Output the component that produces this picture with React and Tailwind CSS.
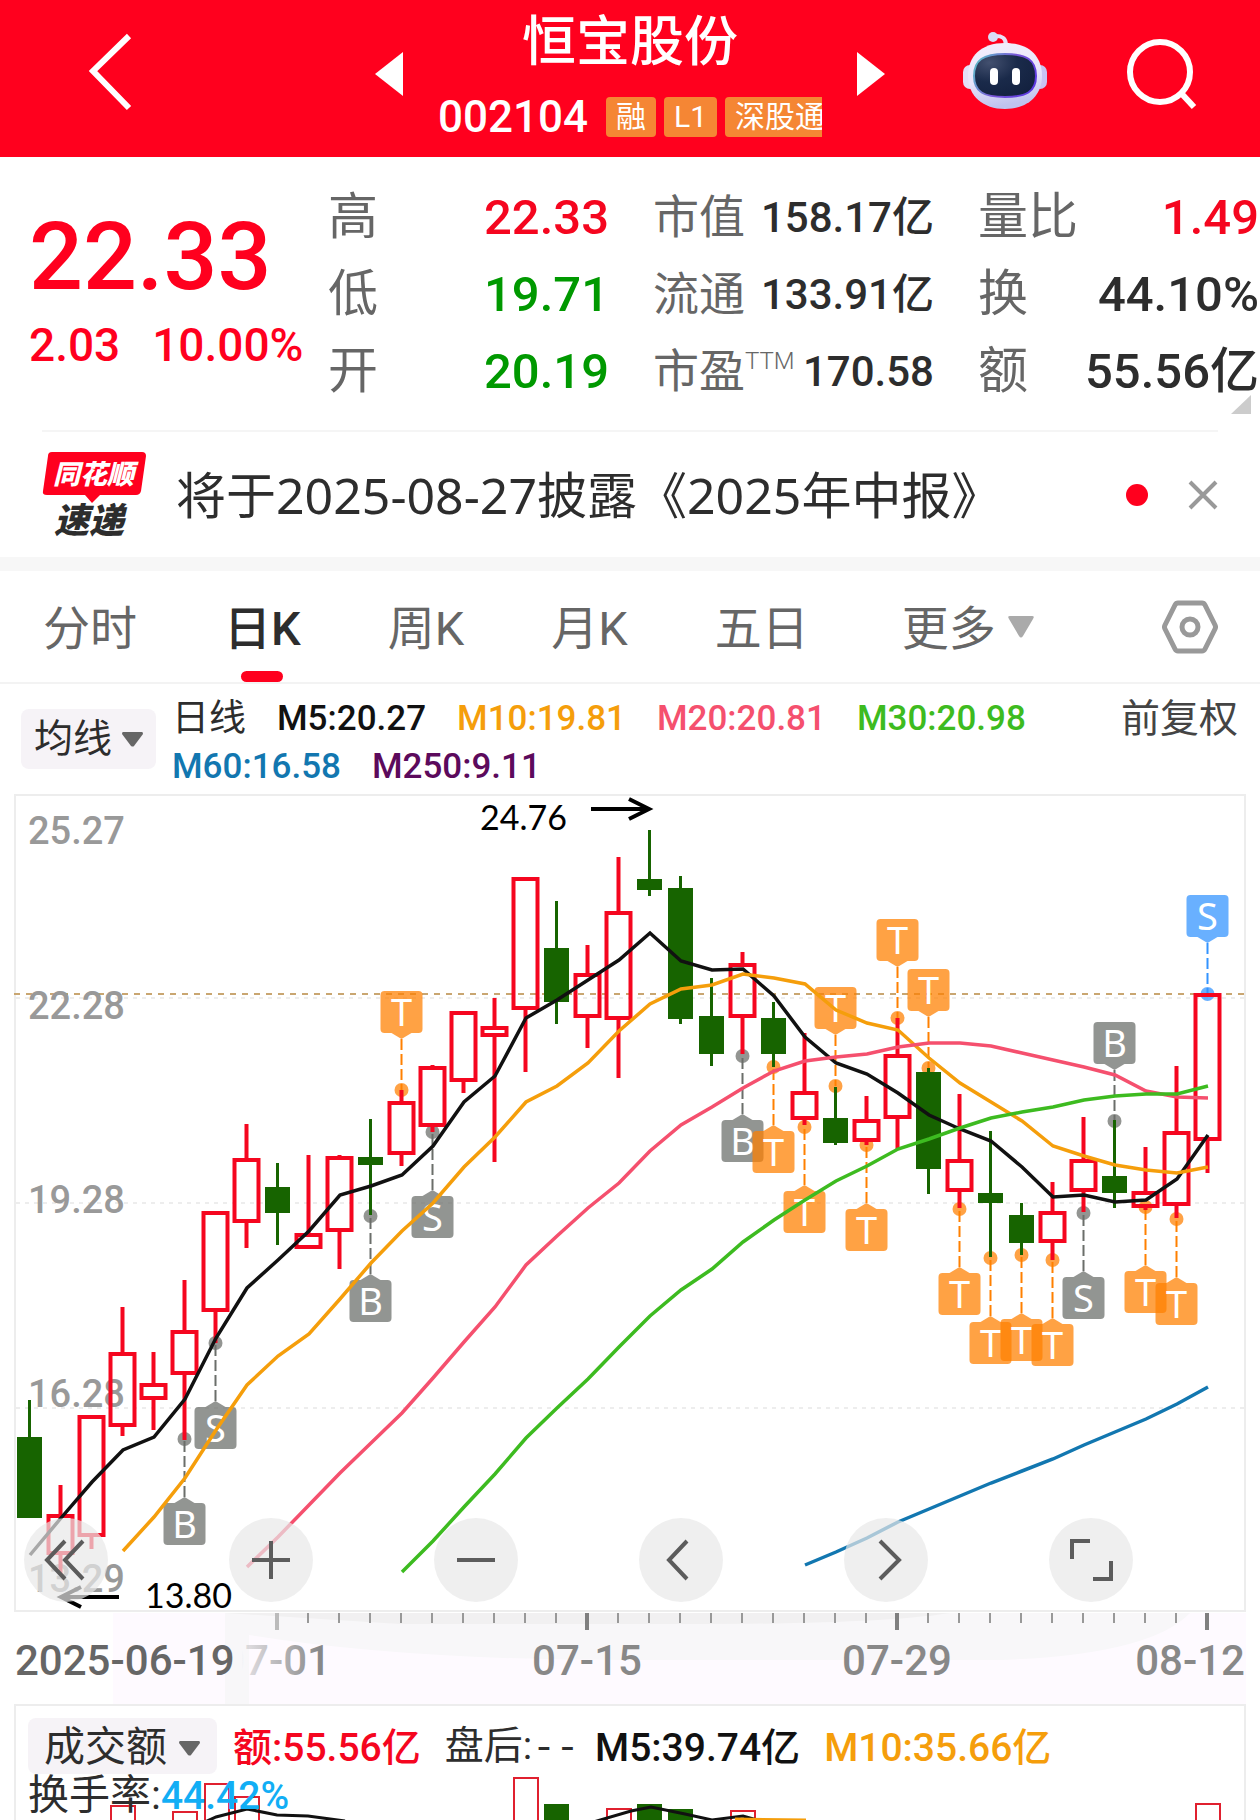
import { useState } from "react";

const CJK = "font-[Roboto,'Noto_Sans_CJK_SC',sans-serif]";
const UP = "#f5061f";
const DOWN = "#176400";

const STEP = 31;
const xAt = (i) => 29 + i * STEP;

// [high, bodyTop, bodyBottom, low, direction]
const CANDLES = [
  [1400, 1437, 1518, 1518, "d"],
  [1485, 1514, 1555, 1575, "u"],
  [1415, 1415, 1537, 1549, "u"],
  [1307, 1352, 1427, 1436, "u"],
  [1352, 1383, 1400, 1430, "u"],
  [1280, 1330, 1375, 1440, "u"],
  [1211, 1211, 1312, 1343, "u"],
  [1124, 1158, 1223, 1248, "u"],
  [1163, 1187, 1213, 1245, "d"],
  [1155, 1233, 1249, 1249, "u"],
  [1155, 1156, 1232, 1269, "u"],
  [1119, 1157, 1165, 1215, "d"],
  [1090, 1101, 1155, 1166, "u"],
  [1065, 1066, 1127, 1132, "u"],
  [1011, 1011, 1082, 1093, "u"],
  [998, 1026, 1037, 1162, "u"],
  [877, 877, 1010, 1072, "u"],
  [901, 948, 1002, 1024, "d"],
  [945, 973, 1018, 1048, "u"],
  [857, 911, 1020, 1078, "u"],
  [830, 879, 890, 896, "d"],
  [876, 888, 1019, 1024, "d"],
  [978, 1016, 1054, 1066, "d"],
  [952, 963, 1018, 1054, "u"],
  [1002, 1018, 1054, 1067, "d"],
  [1033, 1091, 1120, 1125, "u"],
  [1087, 1118, 1143, 1145, "d"],
  [1096, 1119, 1142, 1145, "u"],
  [1018, 1054, 1119, 1149, "u"],
  [1068, 1072, 1169, 1194, "d"],
  [1094, 1159, 1192, 1208, "u"],
  [1131, 1193, 1203, 1257, "d"],
  [1203, 1215, 1243, 1255, "d"],
  [1182, 1211, 1243, 1260, "u"],
  [1117, 1159, 1192, 1212, "u"],
  [1120, 1176, 1193, 1208, "d"],
  [1147, 1191, 1208, 1210, "u"],
  [1066, 1131, 1206, 1218, "u"],
  [993, 993, 1141, 1173, "u"],
];

const AVERAGES = [
  {
    color: "#111",
    start: 0,
    ys: [
      1555, 1518, 1482, 1450, 1437, 1399, 1338, 1288, 1260, 1231, 1195, 1186,
      1175, 1146, 1102, 1076, 1018, 1000, 980, 960, 933, 961, 970, 969, 996,
      1037, 1063, 1074, 1093, 1115, 1129, 1141, 1167, 1197, 1195, 1202, 1200,
      1179, 1135,
    ],
  },
  {
    color: "#f59e0b",
    start: 3,
    ys: [
      1551, 1517, 1478, 1430, 1385, 1356, 1334, 1299, 1263, 1231, 1203, 1167,
      1137, 1102, 1086, 1063, 1031, 1004, 989, 985, 974, 978, 984, 1010, 1023,
      1030, 1058, 1083, 1102, 1121, 1146, 1156, 1165, 1170, 1173, 1167,
    ],
  },
  {
    color: "#f5506e",
    start: 7,
    ys: [
      1567, 1537, 1505, 1473, 1443, 1413, 1378, 1342, 1307, 1265, 1236, 1208,
      1183, 1151, 1125, 1107, 1088, 1071, 1061, 1057, 1054, 1047, 1043, 1043,
      1046, 1053, 1060, 1067, 1075, 1091, 1097, 1098,
    ],
  },
  {
    color: "#3dbb20",
    start: 12,
    ys: [
      1572, 1541, 1507, 1474, 1438, 1408, 1379, 1347, 1316, 1290, 1269, 1242,
      1220, 1200, 1181, 1166, 1149, 1139, 1128, 1118, 1112, 1107, 1100, 1096,
      1094, 1094, 1086,
    ],
  },
  {
    color: "#1277b0",
    start: 25,
    ys: [
      1565, 1552, 1538, 1522, 1509, 1496, 1483, 1471, 1459, 1445, 1432, 1419,
      1404, 1387,
    ],
  },
];

// [candle index, letter, dot y, badge above the candle]
const TRADES = [
  [5, "B", 1439, false],
  [6, "S", 1343, false],
  [11, "B", 1216, false],
  [12, "T", 1090, true],
  [13, "S", 1132, false],
  [23, "B", 1056, false],
  [24, "T", 1067, false],
  [25, "T", 1127, false],
  [26, "T", 1086, true],
  [27, "T", 1145, false],
  [28, "T", 1018, true],
  [29, "T", 1068, true],
  [30, "T", 1209, false],
  [31, "T", 1258, false],
  [32, "T", 1255, false],
  [33, "T", 1260, false],
  [34, "S", 1213, false],
  [35, "B", 1121, true],
  [36, "T", 1207, false],
  [37, "T", 1219, false],
  [38, "S", 994, true],
];

const STATS = [
  [
    { label: "高", value: "22.33", tone: "text-[#f5061f]" },
    { label: "低", value: "19.71", tone: "text-[#009900]" },
    { label: "开", value: "20.19", tone: "text-[#009900]" },
  ],
  [
    { label: "市值", value: "158.17亿", tone: "text-[#2d2d2d]" },
    { label: "流通", value: "133.91亿", tone: "text-[#2d2d2d]" },
    { label: "市盈", sup: "TTM", value: "170.58", tone: "text-[#2d2d2d]" },
  ],
  [
    { label: "量比", value: "1.49", tone: "text-[#f5061f]" },
    { label: "换", value: "44.10%", tone: "text-[#2d2d2d]" },
    { label: "额", value: "55.56亿", tone: "text-[#2d2d2d]" },
  ],
];

const TABS = ["分时", "日K", "周K", "月K", "五日"];

const LEGEND = [
  ["M5:20.27", "text-[#111111]"],
  ["M10:19.81", "text-[#f59e0b]"],
  ["M20:20.81", "text-[#f5506e]"],
  ["M30:20.98", "text-[#3dbb20]"],
  ["M60:16.58", "text-[#1277b0]"],
  ["M250:9.11", "text-[#5c0a5c]"],
];

function Header() {
  return (
    <header className="flex h-[157px] items-center bg-[#ff001e] pr-[63px] pb-[9px] pl-[88px] text-white">
      <button aria-label="返回" className="pb-1">
        <svg width="44" height="78" viewBox="0 0 44 78" fill="none">
          <path d="M41 3 5 38l36 37" stroke="currentColor" strokeWidth="6" />
        </svg>
      </button>
      <div className="mr-[78px] ml-auto flex items-center gap-[35px]">
        <button aria-label="上一只">
          <svg width="28" height="44" viewBox="0 0 28 44" fill="currentColor">
            <path d="M28 0v44L0 22z" />
          </svg>
        </button>
        <div className="flex w-[384px] flex-col items-center gap-6 pt-0.5">
          <h1 className="text-[54px] leading-[60px] font-medium">恒宝股份</h1>
          <div className="flex w-full items-center gap-2 overflow-hidden whitespace-nowrap">
            <span className="mr-2.5 text-[44px] leading-10 font-medium">002104</span>
            {["融", "L1", "深股通"].map((tag) => (
              <span
                key={tag}
                className="flex h-10 shrink-0 items-center rounded-sm bg-[#f58634] px-2.5 text-[30px] leading-10"
              >
                {tag}
              </span>
            ))}
          </div>
        </div>
        <button aria-label="下一只">
          <svg width="28" height="44" viewBox="0 0 28 44" fill="currentColor">
            <path d="M0 0v44l28-22z" />
          </svg>
        </button>
      </div>
      <div className="flex items-center gap-20">
        <button aria-label="智能助手">
          <RobotIcon />
        </button>
        <button aria-label="搜索">
          <svg width="70" height="72" viewBox="0 0 70 72" fill="none" stroke="currentColor" strokeWidth="6">
            <circle cx="33" cy="34" r="30" />
            <path d="m54 55 13 14" />
          </svg>
        </button>
      </div>
    </header>
  );
}

function RobotIcon() {
  return (
    <svg className="mb-2" width="84" height="78" viewBox="0 0 84 78">
      <defs>
        <linearGradient id="shell" x1="0" y1="0" x2="0.2" y2="1">
          <stop offset="0" stopColor="#f3effc" />
          <stop offset="0.6" stopColor="#e9e4fa" />
          <stop offset="1" stopColor="#bfc3ee" />
        </linearGradient>
        <linearGradient id="rim" x1="0" y1="0.3" x2="1" y2="0.7">
          <stop offset="0" stopColor="#5fb4c8" />
          <stop offset="0.5" stopColor="#7a55d8" />
          <stop offset="1" stopColor="#5a38e0" />
        </linearGradient>
        <radialGradient id="face" cx="0.25" cy="0.2" r="0.9">
          <stop offset="0" stopColor="#43506f" />
          <stop offset="0.5" stopColor="#1a2a4a" />
          <stop offset="1" stopColor="#13213f" />
        </radialGradient>
      </defs>
      <path d="M31 5q12-1 12 9" fill="none" stroke="#e9dff5" strokeWidth="4" />
      <circle cx="30" cy="6" r="5" fill="#d9dcf6" />
      <rect x="0" y="34" width="14" height="24" rx="7" fill="#e4def8" />
      <rect x="70" y="34" width="14" height="24" rx="7" fill="#c9c2f2" />
      <path d="M42 12c24 0 37 13 37 33S64 78 42 78 5 65 5 45s13-33 37-33z" fill="url(#shell)" />
      <path
        d="M42 23c22 0 31 6 31 22S63 66 42 66 11 61 11 45s9-22 31-22z"
        fill="url(#face)"
        stroke="url(#rim)"
        strokeWidth="2"
      />
      <rect x="27" y="37" width="8" height="17" rx="4" fill="#fff" />
      <rect x="49" y="37" width="8" height="17" rx="4" fill="#fff" />
    </svg>
  );
}

function Quote() {
  return (
    <section className="relative flex pt-[22px] pr-px pb-5 pl-[29px] font-medium whitespace-nowrap">
      <div className="w-[299px] shrink-0 text-[#ff001e]">
        <p className="pt-7 text-[95px] leading-[100px]">22.33</p>
        <p className="flex gap-8 pt-2.5 text-[46px] leading-[56px]">
          <span>2.03</span>
          <span>10.00%</span>
        </p>
      </div>
      <div className="grid flex-1 grid-cols-3 gap-11">
        {STATS.map((column, c) => (
          <dl key={c}>
            {column.map((item) => (
              <div key={item.label} className="flex h-[77px] items-center justify-between">
                <dt
                  className={
                    c === 1
                      ? "flex text-[46px] font-normal text-[#666]"
                      : "flex text-[50px] font-normal text-[#666]"
                  }
                >
                  {item.label}
                  {item.sup && <sup className="top-0 pt-3 text-[24px] leading-6 font-light">{item.sup}</sup>}
                </dt>
                <dd className={c === 1 ? `${item.tone} text-[42px]` : `${item.tone} text-[49px]`}>{item.value}</dd>
              </div>
            ))}
          </dl>
        ))}
      </div>
      <svg className="absolute right-[9px] bottom-4" width="20" height="19" viewBox="0 0 20 19">
        <path d="M20 0v19H0z" fill="#ccc" />
      </svg>
    </section>
  );
}

function News() {
  const [open, setOpen] = useState(true);
  if (!open) return null;

  return (
    <section className="mx-[42px] flex h-[127px] items-center border-t-2 border-[#f5f5f5]">
      <svg
        width="104"
        height="88"
        viewBox="0 0 104 88"
        className="shrink-0 overflow-visible font-[Noto_Sans_CJK_SC,sans-serif]"
      >
        <path d="M10 1h90q4 0 4 4l-5 35q-1 4-5 4H58l-8 8-7-8H5q-5 0-4-4L6 5q0-4 4-4z" fill="#ff001e" />
        <text x="11" y="33" fontSize="27" fontWeight="900" fontStyle="italic" fill="#fff">
          同花顺
        </text>
        <text x="12" y="82" fontSize="35" fontWeight="900" fontStyle="italic" fill="#2d2d2d">
          速递
        </text>
      </svg>
      <a
        href="#report"
        className="ml-[30px] font-['Noto_Sans','Noto_Sans_CJK_SC',sans-serif] text-[50px] leading-[60px] whitespace-nowrap text-[#2d2d2d]"
      >
        将于2025-08-27披露《2025年中报》
      </a>
      <span className="ml-auto size-[22px] rounded-full bg-[#ff001e]" />
      <button aria-label="关闭" className="ml-10" onClick={() => setOpen(false)}>
        <svg width="30" height="30" viewBox="0 0 30 30" stroke="#999" strokeWidth="4">
          <path d="m2 2 26 26M28 2 2 28" />
        </svg>
      </button>
    </section>
  );
}

function Tabs() {
  const [active, setActive] = useState("日K");

  return (
    <nav className="flex h-[113px] items-center gap-[87px] border-b-2 border-[#f3f3f3] pr-[42px] pl-[43px] text-[47px] whitespace-nowrap text-[#666]">
      {TABS.map((tab) => (
        <button
          key={tab}
          onClick={() => setActive(tab)}
          className={
            tab === active
              ? "relative flex h-full items-center pt-1.5 font-medium text-[#2d2d2d]"
              : "flex h-full items-center pt-1.5"
          }
        >
          {tab}
          {tab === active && (
            <span className="absolute bottom-0 left-1/2 h-[11px] w-[42px] -translate-x-1/2 rounded-full bg-[#ff001e]" />
          )}
        </button>
      ))}
      <button className="ml-1.5 flex h-full items-center gap-3 pt-1.5">
        更多
        <svg className="mb-1.5" width="26" height="22" viewBox="0 0 26 22" fill="#aaa">
          <path d="M2 0h22q3 0 1 3L15 20q-2 3-4 0L1 3q-2-3 1-3z" />
        </svg>
      </button>
      <button aria-label="设置" className="ml-auto">
        <svg width="56" height="54" viewBox="0 0 56 54" fill="none" stroke="#999" strokeWidth="5" strokeLinejoin="round">
          <path d="M16 3h24q2 0 3 2l10 20q1 2 0 4L43 49q-1 2-3 2H16q-2 0-3-2L3 29q-1-2 0-4L13 5q1-2 3-2z" />
          <circle cx="28" cy="27" r="8" />
        </svg>
      </button>
    </nav>
  );
}

function Caret() {
  return (
    <svg width="21" height="15" viewBox="0 0 21 15" fill="#666">
      <path d="M1 0h19q1 0 1 2l-9 12q-1 1-3 0L0 2q0-2 1-2z" />
    </svg>
  );
}

function Legend() {
  return (
    <section className="flex h-[110px] pr-[22px] pl-[21px] text-[35px] whitespace-nowrap">
      <button className="mt-[25px] flex h-[60px] items-center gap-2.5 rounded-lg bg-[#f6f3f7] px-[13px] text-[39px] text-[#2d2d2d]">
        均线
        <Caret />
      </button>
      <div className="ml-4 flex flex-1 flex-wrap content-start gap-x-[31px] pt-[11px] leading-[48px] font-medium">
        <span className="text-[37px] font-normal text-[#2d2d2d]">日线</span>
        {LEGEND.map(([text, tone]) => (
          <span key={text} className={tone}>
            {text}
          </span>
        ))}
      </div>
      <button className="h-[48px] pt-[11px] text-[39px] leading-[48px] text-[#444]">前复权</button>
    </section>
  );
}

function Trade({ index, letter, dot, above }) {
  const x = xAt(index) + 0.5;
  const top = above ? dot - 99 : dot + 64;
  const tip = above ? top + 48 : top - 6;
  const color = letter === "T" ? "#ff8000" : index === 38 ? "#3393ff" : "#6b6e6a";
  const arrow = above
    ? `M${x - 10} ${top + 42}L${x} ${tip}L${x + 10} ${top + 42}z`
    : `M${x - 10} ${top}L${x} ${tip}L${x + 10} ${top}z`;

  return (
    <g>
      <path d={`M${x} ${tip}V${dot}`} stroke={color} strokeWidth="2" strokeDasharray="11 4" />
      <circle cx={x} cy={dot} r="7" fill={color} opacity="0.73" />
      <g fill={color} opacity="0.73">
        <rect x={x - 21} y={top} width="42" height="42" rx="4" />
        <path d={arrow} />
      </g>
      <text x={x} y={top + 35} fontSize="38" fill="#fff" textAnchor="middle" className="font-[Noto_Sans,sans-serif]">
        {letter}
      </text>
    </g>
  );
}

function Candle({ index, data }) {
  const [high, top, bottom, low, dir] = data;
  const x = xAt(index);
  if (dir === "d") {
    return (
      <g fill={DOWN}>
        <rect x={x - 1} y={high} width="3" height={low - high} />
        <rect x={x - 12} y={top} width="25" height={bottom - top} />
      </g>
    );
  }
  return (
    <g stroke={UP} strokeWidth="4" fill="none">
      <path d={`M${x + 0.5} ${high}V${top}M${x + 0.5} ${bottom}V${low}`} />
      <rect x={x - 11.5} y={top + 2} width="24" height={bottom - top - 4} />
    </g>
  );
}

function KLineChart() {
  return (
    <div className="relative">
      <svg viewBox="0 794 1260 910" className="block w-full">
        <defs>
          <linearGradient id="fade" gradientUnits="userSpaceOnUse" x1="242" y1="0" x2="320" y2="0">
            <stop offset="0" stopColor="#888" stopOpacity="0" />
            <stop offset="0.05" stopColor="#888" stopOpacity="0.25" />
            <stop offset="1" stopColor="#888" />
          </linearGradient>
        </defs>
        <rect x="113" y="1613" width="1133" height="91" fill="#fefaff" />
        <path d="M225 1613H1190Q1150 1655 1000 1660H630Q400 1660 249 1635V1704H225z" fill="#f8f7f9" />
        <path d="M225 1613H950Q880 1624 700 1624H400z" fill="#f1f0f1" />

        <rect x="15" y="795" width="1230" height="816" fill="none" stroke="#ededed" strokeWidth="2" />
        <g stroke="#ededed" strokeWidth="2" strokeDasharray="4 5">
          <path d="M16 998H1244M16 1203H1244M16 1408H1244" />
        </g>
        <path d="M14 994H1244" stroke="#c9a671" strokeWidth="2" strokeDasharray="6 6" />

        <g fontSize="38" fontWeight="500" fill="#999">
          <text x="28" y="844">25.27</text>
          <text x="28" y="1019">22.28</text>
          <text x="28" y="1213">19.28</text>
          <text x="28" y="1407">16.28</text>
          <text x="28" y="1592">13.29</text>
        </g>

        {TRADES.map(([index, letter, dot, above]) => (
          <Trade key={index} index={index} letter={letter} dot={dot} above={above} />
        ))}
        {CANDLES.map((data, i) => (
          <Candle key={i} index={i} data={data} />
        ))}
        {AVERAGES.map(({ color, start, ys }) => (
          <polyline
            key={color}
            points={ys.map((y, i) => `${xAt(start + i) + 1},${y}`).join(" ")}
            fill="none"
            stroke={color}
            strokeWidth="3.5"
          />
        ))}

        <g fontSize="34" fill="#000" className="font-[Lato,sans-serif]">
          <text x="480" y="830">24.76</text>
          <text x="145" y="1608">13.80</text>
        </g>
        <g fill="none" stroke="#000" strokeWidth="4">
          <path d="M591 809H648M629 799L649 809L629 819" />
          <path d="M119 1597H62M81 1587L61 1597L81 1607" />
        </g>

        {CANDLES.map((_, i) => {
          if (i < 8) return null;
          const major = (i - 8) % 10 === 0;
          return (
            <path
              key={i}
              d={`M${xAt(i)} 1613V${major ? 1630 : 1623}`}
              stroke={i === 8 ? "#bbb" : major ? "#808080" : "#999"}
              strokeWidth={major ? 4 : 2}
            />
          );
        })}
        <g fontSize="42" fontWeight="500" fill="#888">
          <text x="15" y="1675" fill="#666">2025-06-19</text>
          <text x="331" y="1675" textAnchor="end" fill="url(#fade)">07-01</text>
          <text x="587" y="1675" textAnchor="middle">07-15</text>
          <text x="897" y="1675" textAnchor="middle">07-29</text>
          <text x="1245" y="1675" textAnchor="end">08-12</text>
        </g>
      </svg>

      <div className="absolute bottom-[102px] left-6 flex w-[88%] justify-between">
        <RoundButton label="最左" d="M23 5 5 24l18 19M41 5 23 24l18 19" />
        <RoundButton label="放大" d="M24 5v38M5 24h38" />
        <RoundButton label="缩小" d="M5 24h38" />
        <RoundButton label="左移" d="M30 5 12 24l18 19" />
        <RoundButton label="右移" d="M18 5l19 19-19 19" />
        <RoundButton label="全屏" d="M5 23V5h18M44 25v18H26" />
      </div>
    </div>
  );
}

function RoundButton({ label, d }) {
  return (
    <button
      aria-label={label}
      className="flex size-[84px] items-center justify-center rounded-full bg-[#e8e8e8]/70"
    >
      <svg width="48" height="48" viewBox="0 0 48 48" fill="none" stroke="#5c5c5c" strokeWidth="4">
        <path d={d} />
      </svg>
    </button>
  );
}

// [left, top, direction]
const VOLUMES = [
  [110, 102, "u"],
  [172, 108, "u"],
  [204, 80, "u"],
  [234, 93, "u"],
  [513, 74, "u"],
  [544, 100, "d"],
  [606, 105, "u"],
  [637, 100, "d"],
  [668, 105, "d"],
  [730, 107, "u"],
  [1195, 100, "u"],
];

function Volume() {
  return (
    <section className="relative mx-3.5 h-[116px] overflow-hidden border-2 border-b-0 border-[#ededed] text-[39px] whitespace-nowrap">
      <svg viewBox="16 2 1228 114" className="absolute inset-x-0 top-0 w-full" fill="none">
        {VOLUMES.map(([x, y, dir]) =>
          dir === "u" ? (
            <rect key={x} x={x + 1} y={y} width="24" height="60" stroke="#e0202f" strokeWidth="2" />
          ) : (
            <rect key={x} x={x} y={y} width="25" height="60" fill={DOWN} />
          )
        )}
        <path
          d="M196 122 216 113 247 105 277 111 308 112 345 117M590 119 631 107 651 103 685 110 712 116 743 112 757 116"
          stroke="#111"
          strokeWidth="3"
        />
        <path d="M735 115 806 116" stroke="#f59e0b" strokeWidth="3" />
      </svg>
      <div className="relative pt-3 pl-3">
        <div className="flex h-[56px] items-center">
          <button className="flex h-[56px] items-center gap-3 rounded-lg bg-[#f6f3f7] pt-1 pr-[17px] pl-4 text-[41px] text-[#2d2d2d]">
            成交额
            <Caret />
          </button>
          <span className="ml-4 pt-1 font-medium text-[#f5061f]">额:55.56亿</span>
          <span className="ml-6 pt-1 text-[#2d2d2d]">
            盘后:<span className="font-['Liberation_Mono',monospace]">--</span>
          </span>
          <span className="ml-4 pt-1 font-medium text-[#111]">M5:39.74亿</span>
          <span className="ml-6 pt-1 font-medium text-[#f59e0b]">M10:35.66亿</span>
        </div>
        <p className="text-[41px] leading-[42px] text-[#2d2d2d]">
          换手率:<span className="text-[39px] font-medium text-[#12aef5]">44.42%</span>
        </p>
      </div>
    </section>
  );
}

export default function App() {
  return (
    <main className={`${CJK} min-h-screen overflow-hidden bg-white`}>
      <Header />
      <Quote />
      <News />
      <div className="h-3.5 bg-[#f7f7f7]" />
      <Tabs />
      <Legend />
      <KLineChart />
      <Volume />
    </main>
  );
}
